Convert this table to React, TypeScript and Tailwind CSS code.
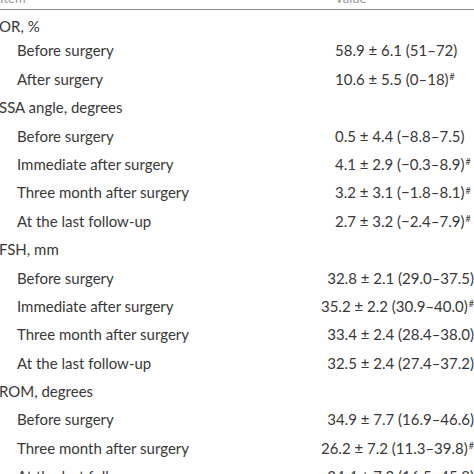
const rows: Array<{ label: string; value?: string; mark?: boolean; group?: boolean }> = [
  { label: "OR, %", group: true },
  { label: "Before surgery", value: "58.9 ± 6.1 (51–72)" },
  { label: "After surgery", value: "10.6 ± 5.5 (0–18)", mark: true },
  { label: "SSA angle, degrees", group: true },
  { label: "Before surgery", value: "0.5 ± 4.4 (−8.8–7.5)" },
  { label: "Immediate after surgery", value: "4.1 ± 2.9 (−0.3–8.9)", mark: true },
  { label: "Three month after surgery", value: "3.2 ± 3.1 (−1.8–8.1)", mark: true },
  { label: "At the last follow-up", value: "2.7 ± 3.2 (−2.4–7.9)", mark: true },
  { label: "FSH, mm", group: true },
  { label: "Before surgery", value: "32.8 ± 2.1 (29.0–37.5)" },
  { label: "Immediate after surgery", value: "35.2 ± 2.2 (30.9–40.0)", mark: true },
  { label: "Three month after surgery", value: "33.4 ± 2.4 (28.4–38.0)" },
  { label: "At the last follow-up", value: "32.5 ± 2.4 (27.4–37.2)" },
  { label: "ROM, degrees", group: true },
  { label: "Before surgery", value: "34.9 ± 7.7 (16.9–46.6)" },
  { label: "Three month after surgery", value: "26.2 ± 7.2 (11.3–39.8)", mark: true },
  { label: "At the last follow-up", value: "34.4 ± 7.2 (16.5–45.8)" },
]

export default function App() {
  return (
    <div
      className="w-[474px] h-[474px] overflow-hidden bg-white text-[#383838] text-[15px]"
      style={{ fontFamily: "Lato, 'Noto Sans', sans-serif" }}
    >
      {/* header, mostly cut off at the top */}
      <div className="flex h-[22px] -mt-[13px] leading-[22px] text-[#9a9a9a] text-[13px]">
        <span className="w-[335px]">Item</span>
        <span>Value</span>
      </div>
      <div className="h-px bg-[#8c8c8c]" />

      <div className="-mt-[2px]">
        {rows.map((r, i) => (
          <div
            key={i}
            className={`flex h-[28.4px] leading-[28.4px] whitespace-nowrap ${i === 0 ? "pt-[4px]" : ""}`}
          >
            <span className={r.group ? "w-[335px] -ml-px" : "w-[318px] ml-[17px]"}>{r.label}</span>
            {r.value && (
              <span>
                {r.value}
                {r.mark && <sup className="text-[9px] ml-px">#</sup>}
              </span>
            )}
          </div>
        ))}
      </div>
    </div>
  )
}
